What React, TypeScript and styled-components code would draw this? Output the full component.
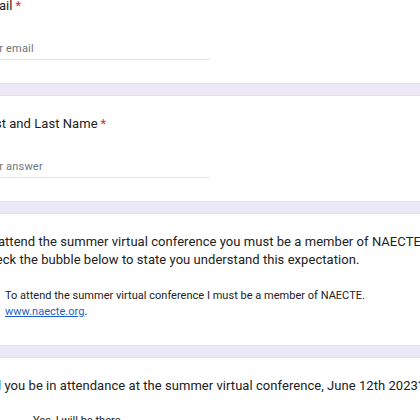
import React from "react";
import styled, { createGlobalStyle } from "styled-components";

const Global = createGlobalStyle`
  html, body {
    margin: 0;
    padding: 0;
    background: #ede8f6;
    overflow: hidden;
    width: 420px;
    height: 420px;
  }
  * { box-sizing: border-box; }
`;

const Page = styled.div`
  display: flex;
  flex-direction: column;
  gap: 11px;
  width: 512px;
  margin-left: -40px;
  margin-top: -23px;
  font-family: Roboto, "Liberation Sans", sans-serif;
`;

const Card = styled.section<{ $pb?: number }>`
  background: #ffffff;
  border: 1px solid #e2dfe9;
  border-radius: 8px;
  padding: 19px 19px ${(p) => p.$pb ?? 23}px 19px;
  display: flex;
  flex-direction: column;
`;

const Question = styled.div`
  font-size: 13px;
  line-height: 18px;
  color: #202124;
  letter-spacing: 0.05px;
`;

const Star = styled.span`
  color: #d93025;
  margin-left: 3px;
`;

const Input = styled.div`
  margin-top: 26px;
  width: 230px;
  font-size: 11px;
  line-height: 16px;
  letter-spacing: 0.2px;
  color: #70757a;
  padding-bottom: 2px;
  border-bottom: 1px solid #e3e3e3;
`;

const CheckRow = styled.label`
  margin-top: 19px;
  display: flex;
  gap: 9px;
  align-items: flex-start;
`;

const Box = styled.span`
  flex: none;
  width: 16px;
  height: 16px;
  border: 2px solid #5f6368;
  border-radius: 2px;
`;

const Label = styled.span`
  font-size: 11px;
  line-height: 16px;
  letter-spacing: 0.02px;
  color: #202124;
`;

const Link = styled.a`
  color: #1a5fc8;
  text-decoration: underline;
`;

const RadioRow = styled.label`
  margin-top: 18px;
  display: flex;
  gap: 37px;
  align-items: center;
`;

const Radio = styled.span`
  flex: none;
  width: 16px;
  height: 16px;
  border: 2px solid #5f6368;
  border-radius: 50%;
`;

export default function App() {
  return (
    <>
      <Global />
      <Page>
        <Card>
          <Question>
            Email<Star>*</Star>
          </Question>
          <Input>Your email</Input>
        </Card>
        <Card>
          <Question>
            First and Last Name<Star>*</Star>
          </Question>
          <Input>Your answer</Input>
        </Card>
        <Card $pb={25}>
          <Question>
            To attend the summer virtual conference you must be a member of NAECTE.
            Check the bubble below to state you understand this expectation.
          </Question>
          <CheckRow>
            <Box />
            <Label>
              To attend the summer virtual conference I must be a member of NAECTE.
              <br />
              <Link href="#">www.naecte.org</Link>.
            </Label>
          </CheckRow>
        </Card>
        <Card>
          <Question>
            Will you be in attendance at the summer virtual conference, June 12th 2023?
          </Question>
          <RadioRow>
            <Radio />
            <Label>Yes, I will be there</Label>
          </RadioRow>
        </Card>
      </Page>
    </>
  );
}
